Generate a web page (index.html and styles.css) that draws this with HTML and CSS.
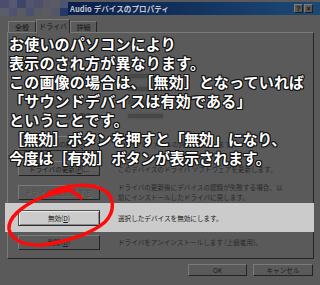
FILE: index.html
```html
<!DOCTYPE html>
<html lang="ja">
<head>
<meta charset="utf-8">
<link rel="stylesheet" href="styles.css">
</head>
<body>
<div class="win">
  <div class="titlebar">
    <div class="blur"><i></i><i></i><i></i><i></i><i></i><i></i><i></i><i></i><i></i><i></i><i></i><i></i><i></i><i></i><i></i><i></i></div>
    <div class="caption">
      <span class="title">Audio デバイスのプロパティ</span>
      <span class="cbtns"><span class="cb">?</span><span class="cb">×</span></span>
    </div>
  </div>
  <div class="tabs">
    <span class="tab t1">全般</span>
    <span class="tab t2 active">ドライバ</span>
    <span class="tab t3">詳細</span>
  </div>
  <div class="panel">
    <div class="info">
      <span class="lbl">プロバイダ:</span><span class="val"></span>
      <span class="lbl">日付:</span><span class="val"></span>
      <span class="lbl">バージョン:</span><span class="val"></span>
      <span class="lbl">デジタル署名者:</span><span class="val long"></span>
    </div>
    <div class="row r1"><span class="btn">ドライバの詳細(<u>I</u>)</span><span class="desc">ドライバ ファイルの詳細を表示します。</span></div>
    <div class="row r2"><span class="btn">ドライバの更新(<u>P</u>)...</span><span class="desc">このデバイスのドライバ ソフトウェアを更新します。</span></div>
    <div class="row r3"><span class="btn off">ドライバを元に戻す(<u>R</u>)</span><span class="desc">ドライバの更新後にデバイスの認識が失敗する場合、以<br>前にインストールしたドライバに戻します。</span></div>
    <div class="row r4"><span class="btn hi">無効(<u>D</u>)</span><span class="desc dk">選択したデバイスを無効にします。</span></div>
    <div class="row r5"><span class="btn">削除(<u>U</u>)</span><span class="desc">ドライバをアンインストールします (上級者用)。</span></div>
  </div>
  <div class="footer">
    <span class="fbtn ok">OK</span>
    <span class="fbtn">キャンセル</span>
  </div>

  <div class="note">
    <div>お使いのパソコンにより</div>
    <div>表示のされ方が異なります。</div>
    <div>この画像の場合は、［無効］となっていれば</div>
    <div>「サウンドデバイスは有効である」</div>
    <div>ということです。</div>
    <div class="tight">［無効］ボタンを押すと「無効」になり、</div>
    <div class="tight">今度は［有効］ボタンが表示されます。</div>
  </div>

  <svg class="loop" width="320" height="285" viewBox="0 0 320 285">
    <path d="M48 194 C60 186 88 181 104 190 C115 197 115 212 105 222 C93 233 66 242 42 245 C24 246 11 240 9 229 C8 218 21 207 38 199 C50 194 62 191 72 190 M66 189 C72 191 77 194 81 198" fill="none" stroke="#ff0a0a" stroke-width="3.5" stroke-linecap="round"/>
  </svg>
</div>
</body>
</html>
```
FILE: styles.css
```css
html, body { margin: 0; padding: 0; }
body { background: #5a5a5a; }
.win {
  position: relative;
  width: 320px;
  height: 285px;
  overflow: hidden;
  background: #5a5a5a;
  font-family: "Noto Sans CJK JP", "Liberation Sans", sans-serif;
}
.titlebar { display: flex; height: 16px; }
.blur {
  width: 68px;
  height: 16px;
  display: grid;
  grid-template-columns: repeat(8, 1fr);
  grid-template-rows: repeat(2, 1fr);
}
.blur i:nth-child(1) { background: #4a4d6e; }
.blur i:nth-child(2) { background: #555870; }
.blur i:nth-child(3) { background: #40466a; }
.blur i:nth-child(4) { background: #52556c; }
.blur i:nth-child(5) { background: #4d5068; }
.blur i:nth-child(6) { background: #575a66; }
.blur i:nth-child(7) { background: #5a5c64; }
.blur i:nth-child(8) { background: #4e5470; }
.blur i:nth-child(9) { background: #5b5d68; }
.blur i:nth-child(10) { background: #4f5270; }
.blur i:nth-child(11) { background: #5a5b60; }
.blur i:nth-child(12) { background: #4c5070; }
.blur i:nth-child(13) { background: #585a62; }
.blur i:nth-child(14) { background: #5c5c5e; }
.blur i:nth-child(15) { background: #535668; }
.blur i:nth-child(16) { background: #233a66; }
.caption {
  flex: 1;
  margin-top: 2px;
  height: 13px;
  background: linear-gradient(90deg, #0a1f4b 0%, #12305c 45%, #1a4370 85%, #1d4873 100%);
  display: flex;
  align-items: center;
  justify-content: space-between;
  padding: 0 7px 0 2px;
}
.title { color: #c6c8cc; font-size: 7.5px; font-weight: 700; letter-spacing: 0.1px; }
.cbtns { display: flex; gap: 1px; }
.cb {
  width: 9px; height: 9px;
  box-sizing: border-box;
  background: #5a5a5a;
  border: 1px solid;
  border-color: #7c7c7c #1e1e1e #1e1e1e #7c7c7c;
  color: #111;
  font: 700 7px/7px "Liberation Sans", sans-serif;
  display: flex; align-items: center; justify-content: center;
}
.tabs {
  display: flex;
  align-items: flex-end;
  height: 16px;
  padding-left: 8px;
}
.tab {
  box-sizing: border-box;
  height: 11px;
  border-top: 1px solid #7a7a7a;
  border-left: 1px solid #7a7a7a;
  border-right: 1px solid #262626;
  color: #161616;
  font-size: 7px;
  line-height: 10px;
  text-align: center;
}
.t1 { width: 28px; }
.t2 { width: 34px; height: 14px; line-height: 12px; margin-bottom: -1px; background: #5a5a5a; position: relative; }
.t3 { width: 27px; }
.panel {
  margin-left: 7px;
  width: 307px;
  height: 227px;
  box-sizing: border-box;
  border-top: 1px solid #7a7a7a;
  border-left: 1px solid #7a7a7a;
  border-right: 1px solid #262626;
  border-bottom: 1px solid #262626;
  display: flex;
  flex-direction: column;
}
.info {
  height: 98px;
  box-sizing: border-box;
  padding: 36px 0 0 45px;
  display: grid;
  grid-template-columns: 75px 40px;
  grid-auto-rows: 13.3px;
  align-items: center;
}
.lbl { font-size: 6.5px; color: #2c2c2c; }
.val { width: 30px; height: 4px; background: #474747; box-shadow: 0 0 2px #474747; }
.val.long { width: 35px; }
.row { display: flex; align-items: center; }
.r1 { height: 25px; }
.r2 { height: 25px; }
.r3 { height: 22px; }
.r4 { height: 29px; background: #cbcbcb; margin: 0 -1px 0 -3px; }
.r5 { height: 20px; }
.btn {
  width: 82px;
  height: 15px;
  margin-left: 10px;
  flex: none;
  box-sizing: border-box;
  border: 1px solid;
  border-color: #7a7a7a #232323 #232323 #7a7a7a;
  color: #1c1c1c;
  font-size: 6.6px;
  display: flex; align-items: center; justify-content: center;
  white-space: nowrap;
}
.btn.off { color: #4a4a4a; text-shadow: 1px 1px 0 #707070; }
.btn.hi {
  margin-left: 13px;
  height: 16px;
  border-color: #505050 #2e2e2e #2e2e2e #505050;
  box-shadow: inset 1px 1px 0 #ececec, inset -1px -1px 0 #8a8a8a;
  color: #1a1a1a;
}
.desc { margin-left: 18px; font-size: 6.6px; line-height: 10px; color: #2a2a2a; white-space: nowrap; }
.desc.dk { color: #1a1a1a; }
.footer {
  display: flex;
  justify-content: flex-end;
  gap: 6px;
  padding-right: 7px;
  margin-top: 5px;
}
.fbtn {
  width: 60px;
  height: 12px;
  box-sizing: border-box;
  border: 1px solid;
  border-color: #7a7a7a #232323 #232323 #7a7a7a;
  color: #1c1c1c;
  font-size: 6.6px;
  display: flex; align-items: center; justify-content: center;
}
.fbtn.ok { width: 59px; }
.note {
  position: absolute;
  left: 9px;
  top: 34px;
  color: #ffffff;
  font-size: 15px;
  font-weight: 700;
  line-height: 19px;
  letter-spacing: 0.2px;
  white-space: nowrap;
  text-shadow: 1px 0 #111, -1px 0 #111, 0 1px #111, 0 -1px #111, 1px 1px #111, -1px -1px #111, 1px -1px #111, -1px 1px #111;
}
.note .tight { letter-spacing: -0.4px; }
.loop { position: absolute; left: 0; top: 0; }
```
